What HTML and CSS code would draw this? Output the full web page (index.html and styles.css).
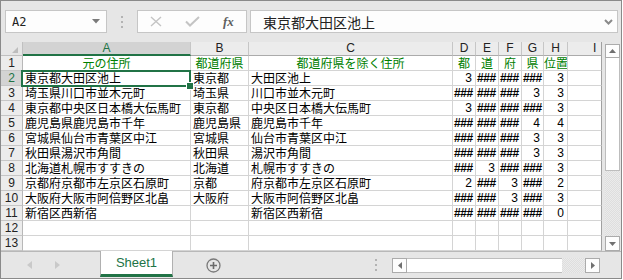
FILE: index.html
```html
<!DOCTYPE html>
<html lang="ja">
<head>
  <meta charset="UTF-8">
  <title>Book1 - Excel</title>
  <link rel="stylesheet" href="styles.css">
</head>
<body>
<div class="window">
  <div class="formula-bar">
    <div class="name-box">
      <span class="name-text">A2</span>
      <svg width="8" height="5" viewBox="0 0 8 5"><polygon points="0,0 8,0 4,4.5" fill="#7a7a7a"/></svg>
    </div>
    <svg class="grip" width="3" height="12" viewBox="0 0 3 12"><rect x="0" y="0" width="2" height="2" fill="#b3b3b3"/><rect x="0" y="5" width="2" height="2" fill="#b3b3b3"/><rect x="0" y="10" width="2" height="2" fill="#b3b3b3"/></svg>
    <div class="fn-box">
      <svg class="ic-x" width="12" height="11" viewBox="0 0 12 11"><path d="M1 1 L11 10 M11 1 L1 10" stroke="#c4c4c4" stroke-width="1.4" fill="none"/></svg>
      <svg class="ic-ok" width="15" height="11" viewBox="0 0 15 11"><polyline points="1,5.5 5,9.5 14,1" stroke="#c4c4c4" stroke-width="2" fill="none"/></svg>
      <span class="ic-fx">fx</span>
    </div>
    <div class="formula-input">
      <span>東京都大田区池上</span>
      <svg class="chev" width="9" height="6" viewBox="0 0 9 6"><polyline points="1,1 4.5,4.5 8,1" stroke="#8a8a8a" stroke-width="2" fill="none"/></svg>
    </div>
  </div>

  <div class="sheet">
    <div class="grid">
      <div class="row head">
        <div class="corner"><svg width="21" height="13" viewBox="0 0 21 13"><polygon points="17,5 17,11 11,11" fill="#bdbdbd"/></svg></div>
        <div class="ch sel">A</div><div class="ch">B</div><div class="ch">C</div><div class="ch">D</div><div class="ch">E</div><div class="ch">F</div><div class="ch">G</div><div class="ch">H</div><div class="ch col-i">I</div>
      </div>
      <div class="row">
        <div class="rh">1</div>
        <div class="cell hd">元の住所</div><div class="cell hd">都道府県</div><div class="cell hd">都道府県を除く住所</div><div class="cell hd">都</div><div class="cell hd">道</div><div class="cell hd">府</div><div class="cell hd">県</div><div class="cell hd">位置</div><div class="cell last"></div>
      </div>
      <div class="row">
        <div class="rh sel">2</div>
        <div class="cell active">東京都大田区池上<span class="selection"><span class="handle"></span></span></div><div class="cell">東京都</div><div class="cell">大田区池上</div><div class="cell num">3</div><div class="cell hash">###</div><div class="cell hash">###</div><div class="cell hash">###</div><div class="cell num">3</div><div class="cell last"></div>
      </div>
      <div class="row">
        <div class="rh">3</div>
        <div class="cell">埼玉県川口市並木元町</div><div class="cell">埼玉県</div><div class="cell">川口市並木元町</div><div class="cell hash">###</div><div class="cell hash">###</div><div class="cell hash">###</div><div class="cell num">3</div><div class="cell num">3</div><div class="cell last"></div>
      </div>
      <div class="row">
        <div class="rh">4</div>
        <div class="cell">東京都中央区日本橋大伝馬町</div><div class="cell">東京都</div><div class="cell">中央区日本橋大伝馬町</div><div class="cell num">3</div><div class="cell hash">###</div><div class="cell hash">###</div><div class="cell hash">###</div><div class="cell num">3</div><div class="cell last"></div>
      </div>
      <div class="row">
        <div class="rh">5</div>
        <div class="cell">鹿児島県鹿児島市千年</div><div class="cell">鹿児島県</div><div class="cell">鹿児島市千年</div><div class="cell hash">###</div><div class="cell hash">###</div><div class="cell hash">###</div><div class="cell num">4</div><div class="cell num">4</div><div class="cell last"></div>
      </div>
      <div class="row">
        <div class="rh">6</div>
        <div class="cell">宮城県仙台市青葉区中江</div><div class="cell">宮城県</div><div class="cell">仙台市青葉区中江</div><div class="cell hash">###</div><div class="cell hash">###</div><div class="cell hash">###</div><div class="cell num">3</div><div class="cell num">3</div><div class="cell last"></div>
      </div>
      <div class="row">
        <div class="rh">7</div>
        <div class="cell">秋田県湯沢市角間</div><div class="cell">秋田県</div><div class="cell">湯沢市角間</div><div class="cell hash">###</div><div class="cell hash">###</div><div class="cell hash">###</div><div class="cell num">3</div><div class="cell num">3</div><div class="cell last"></div>
      </div>
      <div class="row">
        <div class="rh">8</div>
        <div class="cell">北海道札幌市すすきの</div><div class="cell">北海道</div><div class="cell">札幌市すすきの</div><div class="cell hash">###</div><div class="cell num">3</div><div class="cell hash">###</div><div class="cell hash">###</div><div class="cell num">3</div><div class="cell last"></div>
      </div>
      <div class="row">
        <div class="rh">9</div>
        <div class="cell">京都府京都市左京区石原町</div><div class="cell">京都</div><div class="cell">府京都市左京区石原町</div><div class="cell num">2</div><div class="cell hash">###</div><div class="cell num">3</div><div class="cell hash">###</div><div class="cell num">2</div><div class="cell last"></div>
      </div>
      <div class="row">
        <div class="rh">10</div>
        <div class="cell">大阪府大阪市阿倍野区北畠</div><div class="cell">大阪府</div><div class="cell">大阪市阿倍野区北畠</div><div class="cell hash">###</div><div class="cell hash">###</div><div class="cell num">3</div><div class="cell hash">###</div><div class="cell num">3</div><div class="cell last"></div>
      </div>
      <div class="row">
        <div class="rh">11</div>
        <div class="cell">新宿区西新宿</div><div class="cell"></div><div class="cell">新宿区西新宿</div><div class="cell hash">###</div><div class="cell hash">###</div><div class="cell hash">###</div><div class="cell hash">###</div><div class="cell num">0</div><div class="cell last"></div>
      </div>
      <div class="row">
        <div class="rh">12</div>
        <div class="cell"></div><div class="cell"></div><div class="cell"></div><div class="cell"></div><div class="cell"></div><div class="cell"></div><div class="cell"></div><div class="cell"></div><div class="cell last"></div>
      </div>
      <div class="row">
        <div class="rh">13</div>
        <div class="cell"></div><div class="cell"></div><div class="cell"></div><div class="cell"></div><div class="cell"></div><div class="cell"></div><div class="cell"></div><div class="cell"></div><div class="cell last"></div>
      </div>
    </div>
    <div class="vscroll">
      <div class="sb-btn up"><svg width="7" height="4" viewBox="0 0 7 4"><polygon points="0,4 7,4 3.5,0" fill="#6f6f6f"/></svg></div>
      <div class="sb-thumb"></div>
      <div class="sb-track"></div>
      <div class="sb-btn down"><svg width="7" height="4" viewBox="0 0 7 4"><polygon points="0,0 7,0 3.5,4" fill="#6f6f6f"/></svg></div>
    </div>
  </div>

  <div class="tab-bar">
    <div class="tab-nav">
      <svg width="5" height="8" viewBox="0 0 5 8"><polygon points="5,0 5,8 0,4" fill="#c9c9c9"/></svg>
      <svg width="5" height="8" viewBox="0 0 5 8"><polygon points="0,0 0,8 5,4" fill="#c9c9c9"/></svg>
    </div>
    <div class="tab">Sheet1</div>
    <svg class="add-sheet" width="15" height="15" viewBox="0 0 15 15"><circle cx="7.5" cy="7.5" r="6.5" stroke="#7a7a7a" stroke-width="1.3" fill="none"/><path d="M7.5 4 V11 M4 7.5 H11" stroke="#6a6a6a" stroke-width="1.6"/></svg>
    <svg class="grip h-grip" width="3" height="12" viewBox="0 0 3 12"><rect x="0" y="0" width="2" height="2" fill="#b3b3b3"/><rect x="0" y="5" width="2" height="2" fill="#b3b3b3"/><rect x="0" y="10" width="2" height="2" fill="#b3b3b3"/></svg>
    <div class="hscroll">
      <div class="hs-btn"><svg width="4" height="7" viewBox="0 0 4 7"><polygon points="4,0 4,7 0,3.5" fill="#6f6f6f"/></svg></div>
      <div class="hs-thumb"></div>
      <div class="hs-track"></div>
      <div class="hs-btn"><svg width="4" height="7" viewBox="0 0 4 7"><polygon points="0,0 0,7 4,3.5" fill="#6f6f6f"/></svg></div>
    </div>
  </div>
</div>
</body>
</html>
```

FILE: styles.css
```css
* { box-sizing: border-box; }
body { margin: 0; background: #fff; font-family: "Liberation Sans", Arial, sans-serif; }

.window { width: 622px; height: 279px; border: 1px solid #8a8a8a; background: #e6e6e6; display: flex; flex-direction: column; overflow: hidden; }

/* formula bar */
.formula-bar { height: 41px; flex: none; display: flex; align-items: flex-start; padding: 9px 0 0 4px; }
.name-box { width: 102px; height: 23px; border: 1px solid #c6c6c6; background: #fdfdfd; display: flex; align-items: center; justify-content: space-between; padding: 0 6px 0 6px; }
.name-text { font-family: "DejaVu Sans Mono", monospace; font-size: 12px; color: #222; }
.grip { flex: none; }
.formula-bar .grip { margin: 6px 0 0 14px; }
.fn-box { width: 110px; height: 23px; margin-left: 13px; border: 1px solid #c6c6c6; background: #fdfdfd; display: flex; align-items: center; padding-left: 12px; }
.ic-ok { margin-left: 23px; }
.ic-fx { margin-left: 23px; font-family: "Liberation Serif", serif; font-style: italic; font-weight: bold; font-size: 13px; color: #5f5f5f; }
.formula-input { width: 368px; height: 23px; margin-left: 3px; border: 1px solid #c6c6c6; background: #fdfdfd; display: flex; align-items: center; padding: 0 4px 0 12px; font-family: "Noto Sans CJK JP", sans-serif; font-size: 14px; color: #222; }
.formula-input .chev { margin-left: auto; }

/* sheet grid */
.sheet { display: flex; height: 209px; flex: none; }
.grid { width: 601px; background: #fff; }
.row { display: grid; grid-template-columns: 22px 168px 58px 204px 23px 23px 23px 22px 24px 34px; height: 15px; }
.row.head { height: 14px; background: #e6e6e6; }
.row > div { border-right: 1px solid #d4d4d4; border-bottom: 1px solid #d4d4d4; overflow: hidden; white-space: nowrap; }
.corner { background: #e6e6e6; border-color: #c0c0c0 !important; }
.corner svg { display: block; }
.ch { background: #ececec; border-right-color: #c6c6c6 !important; border-bottom-color: #ababab !important; text-align: center; font-size: 12px; line-height: 13px; color: #222; }
.ch.sel { background: #d3d3d3; color: #217346; border-bottom: 2px solid #217346 !important; }
.ch.col-i { text-align: left; padding-left: 25px; border-right-color: #a0a0a0 !important; }
.rh { background: #ececec; border-right-color: #b8b8b8 !important; border-bottom-color: #c6c6c6 !important; text-align: center; font-size: 12px; line-height: 14px; color: #222; }
.rh.sel { background: #d3d3d3; color: #217346; }
.cell { font-family: "Noto Sans CJK JP", sans-serif; font-size: 12px; line-height: 14px; color: #000; padding: 0 2px; }
.cell.last { border-right-color: #a0a0a0; }
.cell.hd { color: #008000; text-align: center; padding: 0; }
.cell.num { font-family: "Liberation Sans", Arial, sans-serif; font-size: 12px; text-align: right; padding-right: 3px; }
.cell.hash { font-family: "Liberation Sans", Arial, sans-serif; font-size: 12px; font-weight: bold; letter-spacing: -0.4px; padding-left: 1px; }
.cell.active { position: relative; overflow: visible; }
.selection { position: absolute; left: -2px; right: -1px; top: -1px; bottom: -2px; border: 2px solid #217346; }
.handle { position: absolute; right: -4px; bottom: -4px; width: 6px; height: 6px; background: #217346; outline: 1px solid #fff; }

/* vertical scrollbar */
.vscroll { width: 19px; display: flex; flex-direction: column; padding: 2px 0 0 3px; }
.sb-btn { width: 15px; background: #fdfdfd; border: 1px solid #ababab; display: flex; align-items: center; justify-content: center; }
.sb-btn.up { height: 14px; }
.sb-btn.down { height: 15px; }
.sb-thumb { width: 15px; height: 113px; background: #fff; border: 1px solid #bdbdbd; border-top: none; }
.sb-track { width: 15px; flex: 1; background: repeating-conic-gradient(#dedede 0 25%, #ebebeb 0 50%) 0 0 / 2px 2px; }

/* sheet tabs */
.tab-bar { height: 27px; flex: none; border-top: 1px solid #b8b8b8; display: flex; align-items: center; }
.tab-nav { width: 99px; display: flex; align-items: center; padding-left: 26px; gap: 23px; }
.tab { width: 73px; height: 26px; margin-top: -1px; align-self: flex-start; background: #fff; border-left: 1px solid #b0b0b0; border-right: 1px solid #b0b0b0; border-bottom: 3px solid #217346; text-align: center; font-size: 13px; line-height: 23px; color: #217346; }
.add-sheet { margin-left: 33px; flex: none; }
.h-grip { margin-left: 154px; }
.hscroll { width: 208px; height: 15px; margin-left: 14px; display: flex; }
.hs-btn { width: 15px; height: 15px; background: #fdfdfd; border: 1px solid #ababab; display: flex; align-items: center; justify-content: center; }
.hs-thumb { width: 155px; background: #fff; border-top: 1px solid #bdbdbd; border-bottom: 1px solid #bdbdbd; }
.hs-track { flex: 1; background: repeating-conic-gradient(#dedede 0 25%, #ebebeb 0 50%) 0 0 / 2px 2px; }
```
